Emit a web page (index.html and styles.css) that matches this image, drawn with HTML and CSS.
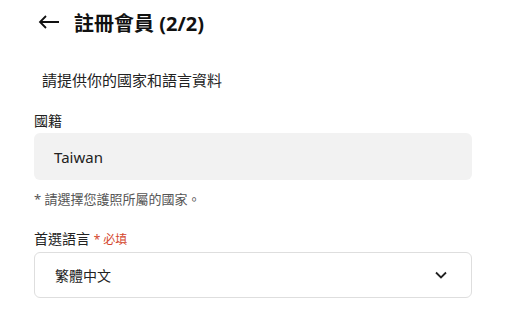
FILE: index.html
```html
<!DOCTYPE html>
<html lang="zh-Hant">
<head>
  <meta charset="UTF-8">
  <meta name="viewport" content="width=device-width, initial-scale=1.0">
  <title>註冊會員</title>
  <link rel="stylesheet" href="styles.css">
</head>
<body>
  <div class="header">
    <button class="back-button">
      <svg width="22" height="14" viewBox="0 0 22 14" fill="none" stroke="#111" stroke-width="1.8">
        <path d="M21 7H2M8 1L2 7l6 6"/>
      </svg>
    </button>
    <div class="title">註冊會員 (2/2)</div>
  </div>

  <div class="form">
    <p class="intro">請提供你的國家和語言資料</p>

    <div class="field">
      <div class="label">國籍</div>
      <div class="input input-disabled">Taiwan</div>
      <div class="hint">* 請選擇您護照所屬的國家。</div>
    </div>

    <div class="field">
      <div class="label">首選語言 <span class="required">* 必填</span></div>
      <div class="input input-select">
        <span>繁體中文</span>
        <svg width="12" height="8" viewBox="0 0 12 8" fill="none" stroke="#222" stroke-width="1.8">
          <path d="M1 1.5l5 5 5-5"/>
        </svg>
      </div>
    </div>
  </div>
</body>
</html>
```

FILE: styles.css
```css
body {
  margin: 0;
  background-color: white;
  color: #222;
  font-family: "Noto Sans", "Noto Sans CJK TC", sans-serif;
}
.header {
  display: flex;
  align-items: center;
  height: 44px;
  padding-left: 38px;
}
.back-button {
  background: transparent;
  border: none;
  padding: 0;
  width: 36px;
  display: flex;
  align-items: center;
  cursor: pointer;
}
.title {
  font-size: 20px;
  font-weight: bold;
  color: #111;
}
.form {
  padding: 0 48px 0 34px;
}
.intro {
  font-size: 15px;
  margin: 25px 0 20px 8px;
  line-height: 22px;
}
.field {
  margin-bottom: 21px;
}
.label {
  font-size: 14px;
  line-height: 20px;
  margin-bottom: 2px;
}
.required {
  color: #d4462c;
  font-size: 12px;
}
.input {
  box-sizing: border-box;
  height: 47px;
  border-radius: 6px;
  padding: 0 20px;
  font-size: 15px;
  display: flex;
  align-items: center;
}
.input-disabled {
  background-color: #f2f2f2;
}
.input-select {
  height: 46px;
  border: 1px solid #dedede;
  justify-content: space-between;
  padding-right: 24px;
  font-size: 14px;
}
.hint {
  font-size: 13px;
  color: #555;
  margin-top: 10px;
  line-height: 18px;
}
```
